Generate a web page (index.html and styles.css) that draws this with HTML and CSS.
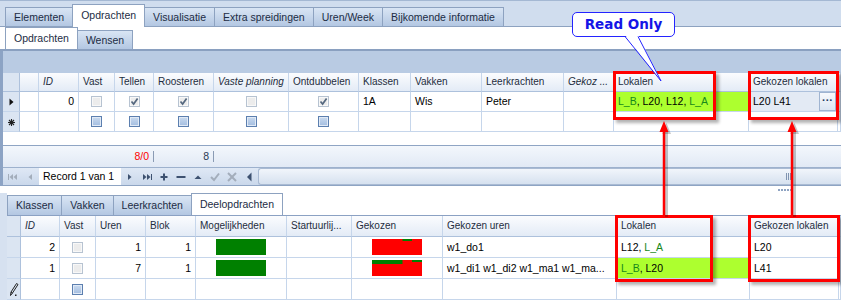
FILE: index.html
```html
<!DOCTYPE html>
<html lang="nl">
<head>
<meta charset="UTF-8">
<meta name="viewport" content="width=device-width, initial-scale=1.0">
<title>Opdrachten</title>
<link rel="stylesheet" href="styles.css">
</head>
<body>
<div class="app">
    <div class="tabs main-tabs">
        <div class="tab">Elementen</div>
        <div class="tab active">Opdrachten</div>
        <div class="tab">Visualisatie</div>
        <div class="tab">Extra spreidingen</div>
        <div class="tab">Uren/Week</div>
        <div class="tab">Bijkomende informatie</div>
    </div>
    <div class="tabs sub-tabs">
        <div class="tab active">Opdrachten</div>
        <div class="tab">Wensen</div>
    </div>

    <div class="upper">
        <div class="group-panel"></div>
        <table class="grid grid-top">
            <colgroup>
                <col><col><col><col><col><col><col><col><col><col><col><col><col><col><col>
            </colgroup>
            <thead>
                <tr>
                    <th class="ind"></th>
                    <th></th>
                    <th class="i">ID</th>
                    <th>Vast</th>
                    <th>Tellen</th>
                    <th>Roosteren</th>
                    <th class="i">Vaste planning</th>
                    <th>Ontdubbelen</th>
                    <th>Klassen</th>
                    <th>Vakken</th>
                    <th>Leerkrachten</th>
                    <th class="i">Gekoz ...</th>
                    <th>Lokalen</th>
                    <th>Gekozen lokalen</th>
                    <th></th>
                </tr>
            </thead>
            <tbody>
                <tr>
                    <td class="ind"><svg width="5" height="8" viewBox="0 0 5 8"><polygon points="0.5,0.5 4.5,4 0.5,7.5" fill="#111"/></svg></td>
                    <td></td>
                    <td class="num">0</td>
                    <td class="chk"><span class="cb"></span></td>
                    <td class="chk"><span class="cb"><svg width="9" height="9" viewBox="0 0 9 9"><path d="M1.5 4.5 L3.6 7 L7.6 1.4" fill="none" stroke="#55687f" stroke-width="1.7"/></svg></span></td>
                    <td class="chk"><span class="cb"><svg width="9" height="9" viewBox="0 0 9 9"><path d="M1.5 4.5 L3.6 7 L7.6 1.4" fill="none" stroke="#55687f" stroke-width="1.7"/></svg></span></td>
                    <td class="chk"><span class="cb"></span></td>
                    <td class="chk"><span class="cb"><svg width="9" height="9" viewBox="0 0 9 9"><path d="M1.5 4.5 L3.6 7 L7.6 1.4" fill="none" stroke="#55687f" stroke-width="1.7"/></svg></span></td>
                    <td>1A</td>
                    <td>Wis</td>
                    <td>Peter</td>
                    <td></td>
                    <td class="lime"><span class="g">L_B</span>, L20, L12, <span class="g">L_A</span></td>
                    <td class="edit">
                        <div class="edit-box">
                            <span>L20 L41</span>
                            <span class="more">···</span>
                        </div>
                    </td>
                    <td></td>
                </tr>
                <tr>
                    <td class="ind"><svg width="7" height="7" viewBox="0 0 7 7"><g stroke="#222" stroke-width="1.1"><line x1="3.5" y1="0" x2="3.5" y2="7"/><line x1="0" y1="3.5" x2="7" y2="3.5"/><line x1="1" y1="1" x2="6" y2="6"/><line x1="6" y1="1" x2="1" y2="6"/></g></svg></td>
                    <td></td>
                    <td></td>
                    <td class="chk"><span class="cb cb-new"></span></td>
                    <td class="chk"><span class="cb cb-new"></span></td>
                    <td class="chk"><span class="cb cb-new"></span></td>
                    <td class="chk"><span class="cb cb-new"></span></td>
                    <td class="chk"><span class="cb cb-new"></span></td>
                    <td></td>
                    <td></td>
                    <td></td>
                    <td></td>
                    <td></td>
                    <td></td>
                    <td></td>
                </tr>
            </tbody>
        </table>
        <div class="grid-rest"></div>
        <div class="footer">
            <div class="foot-pad"></div>
            <div class="foot-cell red">8/0</div>
            <div class="foot-cell foot-wide">8</div>
        </div>
        <div class="navbar">
            <svg class="ic" viewBox="0 0 16 16"><g fill="#a3adbb"><rect x="3" y="5" width="1" height="6"/><polygon points="8,5 4.5,8 8,11"/><polygon points="12,5 8.5,8 12,11"/></g></svg>
            <svg class="ic" viewBox="0 0 16 16"><polygon points="10,5 6.5,8 10,11" fill="#a3adbb"/></svg>
            <div class="nav-record">Record 1 van 1</div>
            <svg class="ic" viewBox="0 0 16 16"><polygon points="6,5 9.5,8 6,11" fill="#3d5170"/></svg>
            <svg class="ic" viewBox="0 0 16 16"><g fill="#3d5170"><polygon points="4,5 7.5,8 4,11"/><polygon points="8,5 11.5,8 8,11"/><rect x="12" y="5" width="1" height="6"/></g></svg>
            <svg class="ic" viewBox="0 0 16 16"><g fill="#3d5170"><rect x="4.5" y="7" width="7" height="2"/><rect x="7" y="4.5" width="2" height="7"/></g></svg>
            <svg class="ic" viewBox="0 0 16 16"><rect x="3.5" y="7" width="9" height="2" fill="#3d5170"/></svg>
            <svg class="ic" viewBox="0 0 16 16"><polygon points="4.5,10 8,6.5 11.5,10" fill="#3d5170"/></svg>
            <svg class="ic" viewBox="0 0 16 16"><polyline points="4,8 7,11 12,4.5" fill="none" stroke="#a3adbb" stroke-width="2"/></svg>
            <svg class="ic" viewBox="0 0 16 16"><g stroke="#a3adbb" stroke-width="2"><line x1="4" y1="4" x2="12" y2="12"/><line x1="12" y1="4" x2="4" y2="12"/></g></svg>
            <svg class="ic" viewBox="0 0 16 16"><polygon points="10.5,3.5 6,8 10.5,12.5" fill="#3d5170"/></svg>
            <div class="track"><span class="grip"></span></div>
        </div>
    </div>

    <div class="splitter"><span class="dots"></span></div>

    <div class="lower">
        <div class="gutter"></div>
        <div class="lower-main">
            <div class="tabs detail-tabs">
                <div class="tab">Klassen</div>
                <div class="tab">Vakken</div>
                <div class="tab">Leerkrachten</div>
                <div class="tab active">Deelopdrachten</div>
            </div>
            <table class="grid grid-bottom">
                <colgroup>
                    <col><col><col><col><col><col><col><col><col><col><col><col>
                </colgroup>
                <thead>
                    <tr>
                        <th class="ind"></th>
                        <th class="i">ID</th>
                        <th>Vast</th>
                        <th>Uren</th>
                        <th>Blok</th>
                        <th>Mogelijkheden</th>
                        <th>Startuurlij...</th>
                        <th>Gekozen</th>
                        <th>Gekozen uren</th>
                        <th>Lokalen</th>
                        <th>Gekozen lokalen</th>
                        <th></th>
                    </tr>
                </thead>
                <tbody>
                    <tr>
                        <td class="ind"></td>
                        <td class="num">2</td>
                        <td class="chk"><span class="cb"></span></td>
                        <td class="num">1</td>
                        <td class="num">1</td>
                        <td class="bar"><svg width="50" height="16"><rect width="50" height="16" fill="#008000"/></svg></td>
                        <td></td>
                        <td class="bar"><svg width="50" height="16"><rect width="50" height="16" fill="#ff0000"/><rect x="30.5" width="9.5" height="2" fill="#008000"/></svg></td>
                        <td>w1_do1</td>
                        <td>L12, <span class="g">L_A</span></td>
                        <td>L20</td>
                        <td></td>
                    </tr>
                    <tr>
                        <td class="ind"></td>
                        <td class="num">1</td>
                        <td class="chk"><span class="cb"></span></td>
                        <td class="num">7</td>
                        <td class="num">1</td>
                        <td class="bar"><svg width="50" height="16"><rect width="50" height="16" fill="#008000"/></svg></td>
                        <td></td>
                        <td class="bar"><svg width="50" height="16"><rect width="50" height="16" fill="#ff0000"/><rect width="30.5" height="4" fill="#008000"/><rect x="40" width="10" height="2" fill="#008000"/></svg></td>
                        <td>w1_di1 w1_di2 w1_ma1 w1_ma...</td>
                        <td class="lime"><span class="g">L_B</span>, L20</td>
                        <td>L41</td>
                        <td></td>
                    </tr>
                    <tr>
                        <td class="ind"><svg width="11" height="15" viewBox="0 0 11 15"><g fill="none" stroke="#222" stroke-width="1"><path d="M2.5 13.5 L3 10 L8.5 1.5 L10 2.5 L4.5 11 Z"/><line x1="3" y1="10" x2="4.5" y2="11"/></g><rect x="7" y="12.5" width="1.5" height="1.5" fill="#222"/></svg></td>
                        <td></td>
                        <td class="chk"><span class="cb cb-new"></span></td>
                        <td></td>
                        <td></td>
                        <td></td>
                        <td></td>
                        <td></td>
                        <td></td>
                        <td></td>
                        <td></td>
                        <td></td>
                    </tr>
                </tbody>
            </table>
        </div>
    </div>

    <!-- annotations drawn over the screenshot -->
    <div class="mark mark-1"></div>
    <div class="mark mark-2"></div>
    <div class="mark mark-3"></div>
    <div class="mark mark-4"></div>
    <svg class="arrows" width="160" height="100" viewBox="0 0 160 100">
        <g fill="rgba(0,0,0,0.22)" stroke="rgba(0,0,0,0.22)">
            <line x1="16.5" y1="99" x2="16.5" y2="14" stroke-width="3"/>
            <polygon points="16.5,5 12,16 21,16" stroke="none"/>
            <line x1="144.5" y1="99" x2="144.5" y2="14" stroke-width="3"/>
            <polygon points="144.5,5 140,16 149,16" stroke="none"/>
        </g>
        <g fill="#ff0000" stroke="#ff0000">
            <line x1="14" y1="97" x2="14" y2="12" stroke-width="2.5"/>
            <polygon points="14,3 9.5,14 18.5,14" stroke="none"/>
            <line x1="142" y1="97" x2="142" y2="12" stroke-width="2.5"/>
            <polygon points="142,3 137.5,14 146.5,14" stroke="none"/>
        </g>
    </svg>
    <div class="callout">Read Only</div>
    <svg class="callout-tail" width="46" height="50" viewBox="0 0 46 50">
        <polygon points="5,0 18,0 41,46" fill="#fff"/>
        <g stroke="#2424ff" stroke-width="1">
            <line x1="5" y1="1.5" x2="41" y2="46"/>
            <line x1="18" y1="1.5" x2="41" y2="46"/>
        </g>
    </svg>
</div>
</body>
</html>
```

FILE: styles.css
```css
/* Basic layout */
* {
    box-sizing: border-box;
}
body {
    margin: 0;
    font-family: "Liberation Sans", Arial, sans-serif;
    font-size: 10px;
    color: #000;
    background: #fff;
}
.app {
    position: relative;
    width: 841px;
    height: 301px;
    overflow: hidden;
    background: #fff;
}

/* Tabs */
.tabs {
    display: flex;
    align-items: flex-end;
}
.tab {
    height: 19px;
    line-height: 18px;
    padding: 0 8px;
    margin-left: -1px;
    border: 1px solid #8da2c0;
    border-bottom: none;
    background: linear-gradient(#d9e5f4, #b3c7e2);
    color: #1c2c44;
    font-size: 10.5px;
    white-space: nowrap;
}
.tab:first-child {
    margin-left: 0;
}
.tab.active {
    position: relative;
    z-index: 1;
    background: #fff;
}
.main-tabs {
    height: 27px;
    padding-left: 5px;
    background: #d0ddee;
    border-top: 1px solid #a4b8d3;
    border-bottom: 1px solid #8da2c0;
}
.main-tabs .tab.active {
    height: 23px;
    margin-bottom: -1px;
    line-height: 20px;
}
.sub-tabs {
    height: 24px;
    padding-left: 5px;
    background: #fff;
    border-bottom: 2px solid #8aa0c0;
}
.sub-tabs .tab.active {
    height: 22px;
    line-height: 20px;
}

/* Upper grid area */
.upper {
    border-left: 3px solid #8ca3c4;
}
.group-panel {
    height: 22px;
    background: #b9cbe3;
}
.grid {
    border-collapse: separate;
    border-spacing: 0;
    table-layout: fixed;
}
.grid th, .grid td {
    padding: 0 4px;
    border-right: 1px solid #c6d6eb;
    border-bottom: 1px solid #c6d6eb;
    white-space: nowrap;
    overflow: hidden;
    text-align: left;
    vertical-align: middle;
    line-height: 1;
}
.grid th {
    font-weight: normal;
    font-size: 10px;
    color: #1e2d40;
    background: linear-gradient(#fbfcfe, #e3ebf6);
    border-bottom-color: #adc1dc;
}
.grid td {
    font-size: 10.5px;
}
.grid .ind, .grid th.ind {
    padding: 0;
    text-align: center;
    background: #dbe5f2;
    border-right-color: #adc1dc;
}
.grid .ind svg {
    display: inline-block;
    vertical-align: middle;
}
.grid .num {
    text-align: right;
}
.grid .chk, .grid .bar {
    padding: 0;
    text-align: center;
}
.grid .bar svg {
    display: inline-block;
    vertical-align: middle;
}
.grid .i {
    font-style: italic;
}
.grid .lime {
    background: #adff2f;
}
.g {
    color: #17891b;
}
.grid .edit {
    background: #e3eaf4;
    padding-right: 1px;
}
.edit-box {
    display: flex;
    align-items: center;
    justify-content: space-between;
}
.more {
    width: 17px;
    height: 19px;
    line-height: 15px;
    text-align: center;
    border: 1px solid #9fb4d1;
    background: linear-gradient(#f8fafd, #dbe5f2);
    color: #1f3b63;
    font-weight: bold;
    font-size: 11px;
}

/* Checkboxes */
.cb {
    display: inline-block;
    vertical-align: middle;
    width: 11px;
    height: 11px;
    border: 1px solid #b7c3d1;
    background: #ececec;
    box-shadow: inset 0 0 0 1px #f8f8f8;
}
.cb svg {
    display: block;
}
.cb-new {
    border-color: #5c7faf;
    background: linear-gradient(#c9daef, #a3bde0);
    box-shadow: inset 0 0 0 1px #e1eaf6;
}

/* Column widths */
.grid-top {
    width: 838px;
}
.grid-top thead tr { height: 19px; }
.grid-top tbody tr { height: 20px; }
.grid-top col:nth-child(1) { width: 17px; }
.grid-top col:nth-child(2) { width: 19px; }
.grid-top col:nth-child(3) { width: 40px; }
.grid-top col:nth-child(4) { width: 36px; }
.grid-top col:nth-child(5) { width: 39px; }
.grid-top col:nth-child(6) { width: 60px; }
.grid-top col:nth-child(7) { width: 75px; }
.grid-top col:nth-child(8) { width: 70px; }
.grid-top col:nth-child(9) { width: 52px; }
.grid-top col:nth-child(10) { width: 71px; }
.grid-top col:nth-child(11) { width: 82px; }
.grid-top col:nth-child(12) { width: 50px; }
.grid-top col:nth-child(13) { width: 135px; }
.grid-top col:nth-child(14) { width: 89px; }
.grid-top col:nth-child(15) { width: 3px; }

.grid-bottom {
    width: 834px;
    border-top: 1px solid #8ba1c3;
}
.grid-bottom tr { height: 21px; }
.grid-bottom col:nth-child(1) { width: 14px; }
.grid-bottom col:nth-child(2) { width: 39px; }
.grid-bottom col:nth-child(3) { width: 36px; }
.grid-bottom col:nth-child(4) { width: 50px; }
.grid-bottom col:nth-child(5) { width: 50px; }
.grid-bottom col:nth-child(6) { width: 91px; }
.grid-bottom col:nth-child(7) { width: 65px; }
.grid-bottom col:nth-child(8) { width: 91px; }
.grid-bottom col:nth-child(9) { width: 174px; }
.grid-bottom col:nth-child(10) { width: 133px; }
.grid-bottom col:nth-child(11) { width: 89px; }
.grid-bottom col:nth-child(12) { width: 2px; }

.grid-rest {
    height: 13px;
    background: #fff;
}

/* Summary footer */
.footer {
    height: 22px;
    display: flex;
    align-items: center;
    border-top: 1px solid #8fa5c4;
    background: linear-gradient(#f3f7fc, #e1e9f5);
    font-size: 10.5px;
    color: #2a3a52;
}
.foot-pad {
    width: 112px;
}
.foot-cell {
    width: 39px;
    height: 11px;
    line-height: 11px;
    padding-right: 4px;
    text-align: right;
    border-right: 1px solid #8a9bb4;
}
.foot-cell.foot-wide {
    width: 60px;
}
.red {
    color: #ff0000;
}

/* Record navigator */
.navbar {
    height: 19px;
    display: flex;
    align-items: center;
    gap: 1px;
    padding-left: 2px;
    border-top: 1px solid #9db1cd;
    border-bottom: 1px solid #8ea4c3;
    background: linear-gradient(#dfe8f5, #cad8eb);
}
.ic {
    width: 16px;
    height: 16px;
    flex: none;
}
.nav-record {
    width: 82px;
    height: 17px;
    line-height: 17px;
    padding-left: 4px;
    background: #fff;
    font-size: 10.5px;
    flex: none;
}
.track {
    flex: 1;
    height: 17px;
    display: flex;
    align-items: center;
    padding-left: 527px;
    border: 1px solid #a9bad3;
    border-right: none;
    border-radius: 3px 0 0 3px;
    background: linear-gradient(#f1f5fb, #d6e1ef);
}
.grip {
    width: 5px;
    height: 7px;
    background: repeating-linear-gradient(90deg, #7f93b0 0 1px, transparent 1px 2px);
}

/* Splitter */
.splitter {
    height: 7px;
    padding: 3px 0 0 778px;
    background: #fff;
}
.dots {
    display: block;
    width: 14px;
    height: 2px;
    background: repeating-linear-gradient(90deg, #8ea3c2 0 2px, transparent 2px 3px);
}

/* Lower detail area */
.lower {
    display: flex;
}
.gutter {
    width: 7px;
    background: #d6e1f0;
}
.lower-main {
    flex: 1;
}
.detail-tabs {
    height: 22px;
    background: #fff;
}
.detail-tabs .tab {
    height: 20px;
    line-height: 19px;
}
.detail-tabs .tab.active {
    height: 22px;
    line-height: 21px;
}

/* Annotations */
.mark {
    position: absolute;
    border: 3px solid #ff0000;
    box-shadow: 3px 3px 3px rgba(0, 0, 0, 0.3);
}
.mark-1 { left: 613px; top: 71px; width: 103px; height: 49px; }
.mark-2 { left: 748px; top: 71px; width: 91px; height: 49px; }
.mark-3 { left: 615px; top: 215px; width: 98px; height: 67px; }
.mark-4 { left: 748px; top: 215px; width: 92px; height: 67px; }
.arrows {
    position: absolute;
    left: 650px;
    top: 118px;
}
.callout {
    position: absolute;
    left: 572px;
    top: 12px;
    width: 103px;
    height: 25px;
    border: 1.5px solid #2424ff;
    border-radius: 5px;
    background: #fff;
    color: #1414e6;
    font-family: "DejaVu Sans", Verdana, sans-serif;
    font-weight: bold;
    font-size: 13.5px;
    line-height: 22px;
    text-align: center;
}
.callout-tail {
    position: absolute;
    left: 620px;
    top: 35px;
}
```
